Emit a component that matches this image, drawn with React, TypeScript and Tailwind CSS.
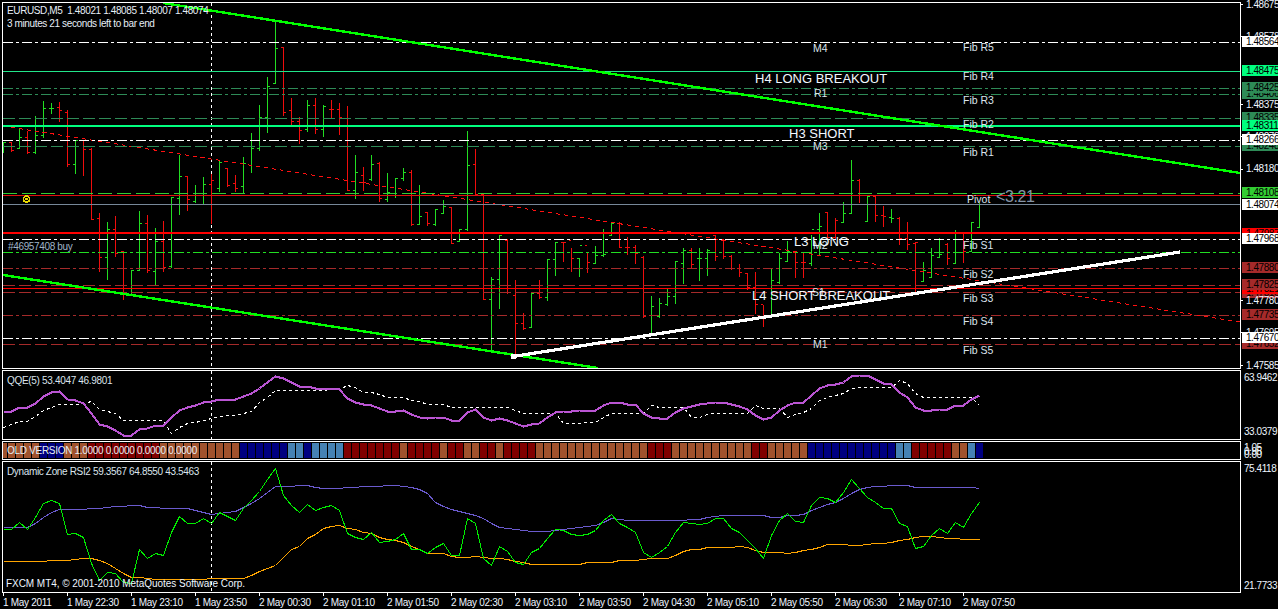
const font = '"Liberation Sans", Arial, sans-serif';

const LIME = '#22dd22';
const RED = '#f00d0d';
const SPRING = '#00ff7f';
const SEA = '#2e8b57';
const BROWN = '#a52a2a';
const DASHDOT = '10 3 3 3';
const DASH = '12 4';

// [up, high, low, open, close] in page pixels, one bar every 8px from x=3
const bars: number[][] = [
  [1, 142, 152, 146, 142], [0, 142, 151, 142, 150], [1, 129, 148, 148, 137], [0, 131, 153, 137, 152],
  [1, 116, 153, 152, 135], [1, 101, 137, 135, 108], [1, 103, 113, 108, 108], [0, 102, 121, 107, 110],
  [0, 110, 166, 112, 164], [1, 140, 173, 164, 140], [0, 140, 175, 140, 149], [0, 148, 219, 149, 219],
  [0, 213, 271, 218, 257], [1, 222, 279, 257, 229], [0, 216, 256, 229, 253], [0, 251, 299, 251, 268],
  [1, 270, 295, 295, 270], [1, 211, 270, 270, 223], [0, 215, 272, 223, 270], [1, 228, 285, 271, 241],
  [0, 221, 271, 241, 267], [1, 197, 267, 266, 197], [1, 155, 214, 198, 176], [0, 176, 210, 176, 199],
  [1, 185, 202, 201, 193], [1, 177, 203, 195, 184], [0, 174, 223, 184, 180], [1, 160, 191, 188, 162],
  [0, 168, 186, 168, 185], [0, 175, 191, 183, 188], [1, 157, 193, 186, 163], [1, 133, 172, 165, 148],
  [1, 105, 150, 148, 117], [1, 77, 132, 117, 86], [1, 22, 83, 83, 48], [0, 47, 115, 47, 112],
  [0, 98, 124, 110, 121], [0, 117, 143, 121, 130], [1, 100, 131, 129, 105], [0, 98, 133, 105, 129],
  [1, 105, 136, 129, 106], [0, 100, 117, 109, 109], [0, 103, 134, 109, 117], [0, 106, 190, 118, 190],
  [1, 155, 198, 190, 172], [0, 167, 190, 175, 182], [1, 155, 180, 179, 164], [0, 162, 201, 163, 198],
  [1, 173, 201, 199, 192], [1, 178, 197, 193, 178], [1, 168, 180, 178, 172], [0, 170, 225, 172, 224],
  [1, 185, 224, 224, 216], [0, 212, 225, 212, 223], [1, 209, 225, 224, 209], [1, 200, 213, 213, 206],
  [0, 207, 243, 207, 243], [1, 229, 241, 241, 229], [1, 131, 230, 229, 165], [0, 149, 195, 164, 194],
  [0, 193, 299, 194, 299], [1, 277, 350, 299, 279], [1, 235, 308, 279, 235], [0, 239, 293, 240, 292],
  [0, 280, 355, 295, 323], [0, 313, 329, 323, 328], [1, 293, 327, 327, 293], [0, 280, 298, 293, 297],
  [1, 259, 300, 297, 259], [1, 242, 275, 259, 242], [0, 242, 261, 242, 242], [0, 248, 271, 240, 258],
  [1, 258, 276, 258, 245], [0, 252, 272, 245, 262], [1, 246, 263, 263, 255], [1, 229, 256, 255, 254],
  [1, 222, 235, 235, 223], [0, 222, 247, 223, 247], [0, 237, 254, 247, 247], [0, 245, 263, 247, 253],
  [0, 256, 317, 257, 316], [1, 296, 334, 333, 306], [1, 298, 317, 316, 303], [1, 289, 305, 304, 296],
  [1, 261, 303, 296, 261], [1, 248, 283, 263, 250], [0, 248, 268, 250, 264], [1, 248, 280, 258, 258],
  [1, 249, 275, 258, 250], [0, 235, 260, 235, 256], [0, 239, 258, 240, 256], [0, 255, 269, 256, 268],
  [0, 264, 276, 268, 272], [0, 273, 289, 273, 287], [0, 272, 313, 287, 304], [0, 305, 326, 304, 316],
  [1, 268, 315, 315, 280], [1, 253, 283, 282, 258], [1, 241, 261, 261, 251], [0, 252, 277, 252, 262],
  [0, 252, 277, 262, 262], [1, 235, 265, 263, 229], [1, 213, 255, 229, 226], [0, 212, 239, 212, 237],
  [0, 218, 239, 237, 220], [1, 202, 222, 222, 213], [1, 160, 213, 213, 180], [0, 179, 202, 180, 195],
  [1, 196, 221, 221, 196], [0, 195, 221, 196, 215], [0, 206, 226, 215, 216], [1, 209, 222, 217, 218],
  [0, 217, 244, 218, 238], [0, 222, 249, 238, 244], [0, 242, 292, 243, 242], [1, 262, 281, 281, 270],
  [1, 248, 277, 277, 255], [1, 238, 257, 257, 254], [0, 243, 264, 244, 258], [1, 230, 263, 263, 233],
  [0, 232, 262, 232, 251], [1, 222, 251, 251, 222], [1, 203, 227, 227, 204],
];

const qqeMain = [
  411, 411, 407, 407, 403, 396, 392, 391, 399, 400, 403, 413, 424, 426, 430, 435, 435, 429, 428, 425, 425, 417, 410, 407,
  405, 402, 401, 399, 399, 399, 396, 393, 388, 382, 376, 378, 382, 386, 386, 388, 388, 388, 389, 398, 402, 404, 405, 408,
  411, 411, 410, 414, 417, 418, 417, 417, 420, 420, 412, 409, 417, 420, 418, 420, 423, 426, 424, 423, 417, 412, 411, 411,
  410, 410, 410, 405, 402, 402, 404, 404, 413, 417, 418, 418, 412, 408, 406, 404, 403, 402, 402, 404, 406, 409, 415, 419,
  417, 410, 405, 402, 402, 395, 388, 385, 384, 382, 376, 375, 375, 379, 383, 384, 392, 397, 407, 410, 410, 409, 409, 405,
  405, 399, 395,
];
const qqeSignal = [
  427, 424, 421, 421, 416, 410, 407, 404, 404, 404, 403, 401, 409, 411, 413, 420, 420, 420, 420, 420, 420, 433, 427, 423,
  422, 420, 418, 416, 415, 415, 413, 411, 402, 397, 390, 390, 390, 390, 390, 390, 390, 389, 389, 385, 387, 392, 392, 394,
  397, 397, 397, 400, 401, 404, 404, 404, 407, 407, 407, 407, 407, 407, 407, 407, 410, 413, 413, 413, 413, 413, 423, 423,
  423, 422, 422, 417, 413, 413, 413, 413, 413, 405, 407, 407, 407, 407, 417, 417, 414, 413, 413, 413, 413, 413, 405, 408,
  408, 408, 417, 414, 412, 408, 400, 397, 395, 393, 388, 387, 387, 387, 387, 387, 380, 383, 393, 397, 397, 397, 397, 397,
  397, 397, 405,
];
const rsiGreen = [
  529, 529, 522, 529, 517, 503, 500, 503, 534, 533, 537, 563, 580, 572, 573, 582, 583, 549, 558, 553, 555, 532, 516, 523,
  523, 518, 523, 512, 516, 520, 508, 500, 491, 479, 468, 495, 505, 512, 504, 510, 507, 505, 510, 533, 537, 539, 532, 542,
  541, 539, 533, 549, 549, 553, 547, 543, 555, 555, 518, 523, 558, 565, 546, 551, 562, 564, 552, 548, 538, 529, 530, 534,
  535, 534, 530, 520, 514, 523, 527, 532, 552, 557, 552, 546, 532, 522, 523, 524, 523, 518, 518, 528, 532, 540, 548, 558,
  535, 520, 513, 521, 522, 505, 497, 498, 502, 492, 479, 488, 497, 502, 508, 508, 523, 526, 548, 546, 535, 528, 533, 522,
  527, 513, 502,
];
const rsiBlue = [
  527, 527, 527, 527, 523, 517, 512, 509, 509, 509, 509, 508, 508, 507, 506, 506, 505, 505, 507, 507, 508, 508, 508, 508,
  510, 512, 514, 513, 512, 511, 507, 503, 498, 492, 486, 486, 486, 485, 485, 487, 488, 488, 488, 487, 487, 486, 486, 486,
  485, 485, 486, 487, 489, 493, 502, 506, 509, 511, 513, 515, 518, 523, 527, 528, 529, 530, 531, 531, 531, 530, 529, 528,
  527, 526, 525, 522, 518, 519, 520, 520, 520, 520, 520, 520, 520, 520, 519, 519, 517, 516, 515, 515, 515, 515, 515, 515,
  517, 517, 515, 515, 514, 510, 507, 504, 502, 498, 493, 489, 487, 486, 486, 485, 485, 485, 487, 487, 487, 487, 487, 487,
  487, 487, 488,
];
const rsiOrange = [
  561, 561, 561, 561, 561, 561, 560, 560, 560, 559, 558, 558, 560, 563, 568, 573, 577, 577, 578, 579, 579, 579, 579, 579,
  579, 579, 578, 578, 578, 578, 578, 575, 571, 568, 565, 557, 549, 546, 538, 534, 528, 526, 525, 528, 529, 532, 533, 537,
  539, 540, 542, 546, 549, 553, 553, 553, 556, 557, 557, 556, 557, 558, 558, 559, 561, 562, 564, 564, 564, 564, 564, 564,
  564, 562, 562, 562, 562, 560, 560, 560, 559, 558, 558, 558, 555, 551, 549, 549, 547, 547, 547, 547, 546, 547, 550, 552,
  552, 552, 553, 552, 550, 549, 547, 544, 544, 544, 545, 545, 544, 543, 543, 542, 540, 539, 537, 536, 536, 537, 538, 538,
  539, 539, 539,
];

// y, colour, dash, width: horizontal levels of the main window
const levels: [number, string, string, number][] = [
  [42, '#ffffff', DASHDOT, 1],
  [71, '#22e58a', '', 1],
  [88, SEA, DASHDOT, 1],
  [94, SEA, DASHDOT, 1],
  [118, SEA, DASH, 1],
  [126, SPRING, '', 2],
  [140, '#ffffff', DASHDOT, 1],
  [146, SEA, DASH, 1],
  [193, '#32cd32', '14 5', 1],
  [195, '#e01010', '', 1],
  [204, '#778899', '', 1],
  [233, '#ff0000', '', 2],
  [239, '#ffffff', DASHDOT, 1],
  [252, '#22dd22', DASHDOT, 1],
  [268, BROWN, DASHDOT, 1],
  [285, BROWN, DASH, 1],
  [288, '#ff0000', '', 1],
  [292, BROWN, DASH, 1],
  [315, BROWN, DASHDOT, 1],
  [338, '#ffffff', DASHDOT, 1],
  [344, BROWN, DASH, 1],
];

// y of the box top, price, style; painted in this order
const priceTags: [number, string, string][] = [
  [-1, '1.48675', 'text-[#eef6ff]'],
  [31, '1.48578', 'text-[#eef6ff]'],
  [36, '1.48564', 'bg-white text-black'],
  [65, '1.48475', 'bg-[#00ff7f] text-black'],
  [88, '1.48406', 'bg-[#2e8b57] text-black'],
  [82, '1.48425', 'bg-[#2e8b57] text-black'],
  [99, '1.48375', 'text-[#eef6ff]'],
  [112, '1.48335', 'bg-[#2e8b57] text-black'],
  [120, '1.48311', 'bg-[#00ff7f] text-black'],
  [131, '1.48278', 'text-[#eef6ff]'],
  [140, '1.48248', 'bg-[#2e8b57] text-black'],
  [134, '1.48266', 'bg-white text-black'],
  [163, '1.48180', 'text-[#eef6ff]'],
  [187, '1.48108', 'bg-[#32cd32] text-black'],
  [199, '1.48074', 'bg-white text-black'],
  [228, '1.47987', 'bg-[#ff0000] text-black'],
  [233, '1.47968', 'bg-white text-black'],
  [262, '1.47880', 'bg-[#a52a2a] text-black'],
  [287, '1.47816', 'bg-[#a52a2a] text-black'],
  [283, '1.47821', 'bg-[#ff0000] text-black'],
  [279, '1.47825', 'bg-[#a52a2a] text-black'],
  [295, '1.47780', 'text-[#eef6ff]'],
  [309, '1.47735', 'bg-[#a52a2a] text-black'],
  [327, '1.47695', 'text-[#eef6ff]'],
  [338, '1.47652', 'bg-[#a52a2a] text-black'],
  [332, '1.47670', 'bg-white text-black'],
  [360, '1.47585', 'text-[#eef6ff]'],
];
const priceTicks = [4, 36, 104, 136, 169, 300, 332, 365];

const smallMarks: [number, number, string][] = [
  [813, 42, 'M4'], [963, 41, 'Fib R5'], [963, 70, 'Fib R4'], [814, 87, 'R1'], [963, 94, 'Fib R3'], [963, 118, 'Fib R2'],
  [813, 140, 'M3'], [963, 146, 'Fib R1'], [967, 193, 'Pivot'], [813, 239, 'M2'], [963, 239, 'Fib S1'], [963, 268, 'Fib S2'],
  [812, 286, 'S1'], [963, 292, 'Fib S3'], [963, 315, 'Fib S4'], [813, 338, 'M1'], [963, 344, 'Fib S5'],
];
const bigMarks: [number, number, string][] = [
  [755, 71, 'H4 LONG BREAKOUT'], [789, 126, 'H3 SHORT'], [794, 234, 'L3 LONG'], [752, 288, 'L4 SHORT BREAKOUT'],
];

const S = 'n', N = 'b', M = 'm', B = 's';
const strip = [
  ...Array(5).fill(S), ...Array(3).fill(N), ...Array(3).fill(S), ...Array(9).fill(M), ...Array(10).fill(S),
  ...Array(6).fill(N), B, B, N, B, B, B, B, ...Array(7).fill(M), S, M, M, M, M, S, M, M, S, S, M, M, S, M, M, M, M,
  ...Array(14).fill(S), M, M, M, ...Array(10).fill(S), M, M, ...Array(5).fill(S), ...Array(11).fill(N), B, B,
  ...Array(5).fill(M), S, S, B, N,
];
const stripColors: Record<string, string> = {
  n: 'bg-[#a0522d]',
  b: 'bg-[#000080]',
  m: 'bg-[#800000]',
  s: 'bg-[#4682b4]',
};

const times = [
  '1 May 2011', '1 May 22:30', '1 May 23:10', '1 May 23:50', '2 May 00:30', '2 May 01:10', '2 May 01:50', '2 May 02:30',
  '2 May 03:10', '2 May 03:50', '2 May 04:30', '2 May 05:10', '2 May 05:50', '2 May 06:30', '2 May 07:10', '2 May 07:50',
];

const pts = (ys: number[]) => ys.map((y, i) => `${3.5 + 8 * i},${y + 0.5}`).join(' ');

function CrossHair({ from, to }: { from: number; to: number }) {
  return <line x1={211.5} x2={211.5} y1={from} y2={to} stroke="#fff" strokeDasharray="3 3" />;
}

function AxisLabel({ top, text, className, wide }: { top: number; text: string; className?: string; wide?: boolean }) {
  return (
    <div
      className={`absolute left-[1px] w-[36px] h-[11px] ${wide ? 'pl-[2px]' : 'pl-[4px]'} text-[10px] leading-[11px] tracking-[-0.45px] whitespace-nowrap overflow-hidden ${className ?? 'text-[#eef6ff]'}`}
      style={{ top }}
    >
      {text}
    </div>
  );
}

function MainChart() {
  return (
    <div className="flex h-[367px]">
      <div className="relative ml-[2px] w-[1239px] border border-white overflow-hidden">
        <svg width={1237} height={365} viewBox="3 3 1237 365" shapeRendering="crispEdges" className="block">
          <CrossHair from={3} to={368} />
          {bars.map(([up, high, low, open, close], i) => {
            const x = 3 + 8 * i;
            return (
              <path
                key={i}
                fill="none"
                stroke={up ? LIME : RED}
                d={`M${x + 0.5} ${high}V${low + 1}M${x - 2} ${open + 0.5}H${x}M${x + 1} ${close + 0.5}H${x + 3}`}
              />
            );
          })}
          <line x1={3} y1={126} x2={1240} y2={322} stroke="#ff1010" strokeDasharray="4 4" />
          {levels.map(([y, color, dash, width]) => (
            <line
              key={y}
              x1={3}
              x2={1240}
              y1={width === 2 ? y : y + 0.5}
              y2={width === 2 ? y : y + 0.5}
              stroke={color}
              strokeWidth={width}
              strokeDasharray={dash || undefined}
            />
          ))}
          <line x1={163} y1={3} x2={1240} y2={173} stroke="#00ff00" strokeWidth={2.4} />
          <line x1={3} y1={275} x2={598} y2={368} stroke="#00ff00" strokeWidth={2.4} />
          <line x1={513} y1={356.5} x2={1180} y2={252} stroke="#ffffff" strokeWidth={3.2} />
          <rect x={511} y={354} width={5} height={5} fill="#fff" />
          <circle cx={26.5} cy={199} r={3} fill="none" stroke="#e8d800" strokeWidth={1.5} />
          <rect x={25} y={198} width={3} height={2} fill="#e8d800" />
        </svg>
        <div className="absolute left-[4px] top-[1px] text-[10px] leading-[13px] tracking-[-0.38px] text-[#e6eef6] whitespace-pre">
          <div>EURUSD,M5  1.48021 1.48085 1.48007 1.48074</div>
          <div>3 minutes 21 seconds left to bar end</div>
        </div>
        <div className="absolute left-[5px] top-[237px] text-[10px] leading-[13px] tracking-[-0.35px] text-[#9fb4c8]">
          #46957408 buy
        </div>
        {smallMarks.map(([x, y, text]) => (
          <div
            key={text}
            className="absolute text-[10.5px] leading-[13px] text-[#dbe4ec] whitespace-nowrap"
            style={{ left: x - 3, top: y - 3 }}
          >
            {text}
          </div>
        ))}
        {bigMarks.map(([x, y, text]) => (
          <div
            key={text}
            className="absolute text-[13px] leading-[16px] text-[#f2f8ff] whitespace-nowrap"
            style={{ left: x - 3, top: y - 3 }}
          >
            {text}
          </div>
        ))}
        <div className="absolute left-[993px] top-[184px] text-[16px] leading-[20px] tracking-[-0.4px] text-[#8493a6]">
          {'<3.21'}
        </div>
      </div>
      <div className="relative w-[37px]">
        {priceTicks.map((y) => (
          <div key={y} className="absolute left-0 w-[2px] h-px bg-white" style={{ top: y - 2 }} />
        ))}
        {priceTags.map(([y, text, style]) => (
          <AxisLabel key={text} top={y - 2} text={text} className={style} />
        ))}
      </div>
    </div>
  );
}

function QqePane() {
  return (
    <div className="flex h-[70px] mt-px">
      <div className="relative ml-[2px] w-[1239px] border border-white overflow-hidden">
        <svg width={1237} height={68} viewBox="3 371 1237 68" shapeRendering="crispEdges" className="block">
          <CrossHair from={371} to={439} />
          <polyline points={pts(qqeSignal)} fill="none" stroke="#fff" strokeDasharray="3 3" />
          <polyline points={pts(qqeMain)} fill="none" stroke="#ba55d3" strokeWidth={2} />
        </svg>
        <div className="absolute left-[4px] top-[3px] text-[10px] leading-[13px] tracking-[-0.32px] text-[#dbe4ec]">
          QQE(5) 53.4047 46.9801
        </div>
      </div>
      <div className="relative w-[37px]">
        <AxisLabel wide top={2} text="63.9462" />
        <AxisLabel wide top={56} text="33.0379" />
      </div>
    </div>
  );
}

function StripPane() {
  return (
    <div className="flex h-[19px] mt-px">
      <div className="relative ml-[2px] w-[1239px] border border-white overflow-hidden">
        <div className="flex gap-px -ml-[3px] mt-px">
          {strip.map((c, i) => (
            <div key={i} className={`w-[7px] h-[15px] shrink-0 ${stripColors[c]}`} />
          ))}
        </div>
        <div className="absolute left-[4px] top-[2px] text-[10px] leading-[13px] tracking-[-0.3px] text-[#e6eef6] whitespace-nowrap">
          OLD VERSION 1.0000 0.0000 0.0000 0.0000
        </div>
      </div>
      <div className="relative w-[37px] overflow-hidden">
        <AxisLabel wide top={1} text="1.05" />
        <AxisLabel wide top={5} text="0.95" />
        <AxisLabel wide top={8} text="0.00" />
      </div>
    </div>
  );
}

function RsiPane() {
  return (
    <div className="flex h-[132px] mt-px">
      <div className="relative ml-[2px] w-[1239px] border border-white overflow-hidden">
        <svg width={1237} height={130} viewBox="3 462 1237 130" shapeRendering="crispEdges" className="block">
          <CrossHair from={462} to={592} />
          <polyline points={pts(rsiBlue)} fill="none" stroke="#6a5acd" />
          <polyline points={pts(rsiOrange)} fill="none" stroke="#ffa500" />
          <polyline points={pts(rsiGreen)} fill="none" stroke="#00ee00" />
        </svg>
        <div className="absolute left-[4px] top-[3px] text-[10px] leading-[13px] tracking-[-0.35px] text-[#dbe4ec]">
          Dynamic Zone RSI2 59.3567 64.8550 43.5463
        </div>
        <div className="absolute left-[3px] top-[115px] text-[10px] leading-[13px] tracking-[-0.05px] text-[#eef6ff]">
          FXCM MT4, © 2001-2010 MetaQuotes Software Corp.
        </div>
      </div>
      <div className="relative w-[37px]">
        <AxisLabel wide top={2} text="75.4118" />
        <AxisLabel wide top={119} text="21.7733" />
      </div>
    </div>
  );
}

function TimeAxis() {
  return (
    <div className="flex pl-[3px] h-[16px]">
      {times.map((t) => (
        <div
          key={t}
          className="relative w-[64px] shrink-0 text-[10px] leading-[13px] tracking-[-0.3px] pt-[3px] text-[#eef6ff] whitespace-nowrap"
        >
          <div className="absolute left-0 top-0 w-px h-[3px] bg-white" />
          {t}
        </div>
      ))}
    </div>
  );
}

export default function App() {
  return (
    <div className="w-[1278px] h-[609px] pt-[2px] bg-black overflow-hidden" style={{ fontFamily: font }}>
      <MainChart />
      <QqePane />
      <StripPane />
      <RsiPane />
      <TimeAxis />
    </div>
  );
}
